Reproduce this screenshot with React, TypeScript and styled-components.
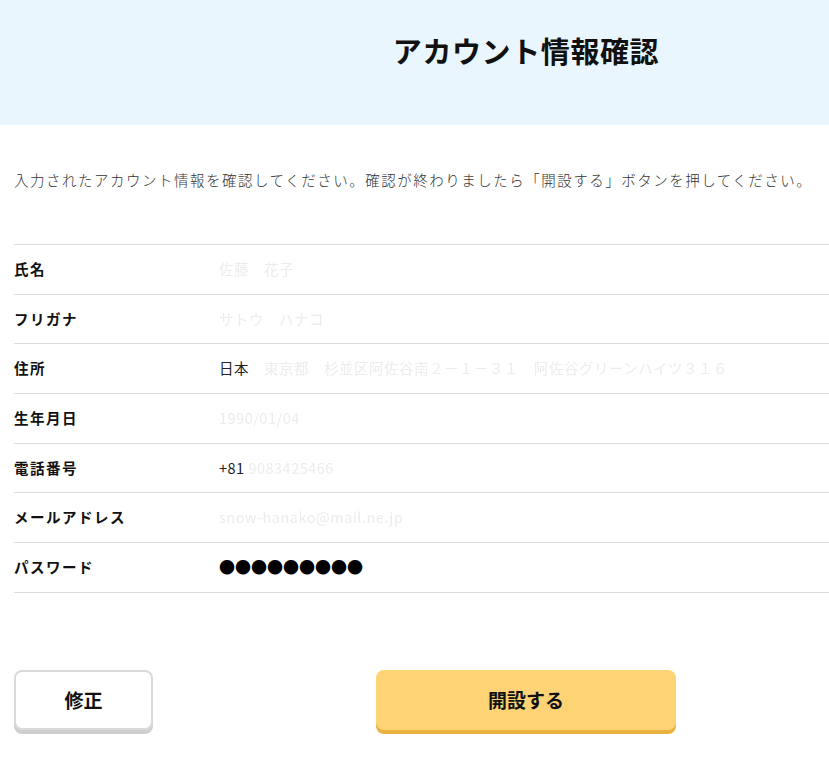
import React from 'react'
import styled, { createGlobalStyle } from 'styled-components'

const GlobalStyle = createGlobalStyle`
  html, body {
    margin: 0;
    padding: 0;
    background: #fff;
    overflow-x: hidden;
  }
  body {
    font-family: "Noto Sans CJK JP", "Noto Sans", sans-serif;
    color: #222;
  }
`

const Page = styled.div`
  width: 1052px;
  overflow: hidden;
`

const Header = styled.header`
  background-color: #e9f6fd;
  height: 125px;
  display: flex;
  justify-content: center;
  padding-top: 29px;
  box-sizing: border-box;
`

const Title = styled.h1`
  margin: 0;
  font-size: 29px;
  font-weight: 700;
  line-height: 42px;
  color: #111;
  letter-spacing: 0.6px;
`

const Main = styled.main`
  padding: 0 14px;
`

const Lead = styled.p`
  margin: 44px 0 0;
  font-size: 14.5px;
  line-height: 22px;
  letter-spacing: 1.5px;
  color: #333;
  font-weight: 300;
`

const Table = styled.dl`
  margin: 53px 0 0;
  border-top: 1px solid #dcdcdc;
`

const Row = styled.div`
  display: flex;
  align-items: center;
  height: 48.7px;
  padding-bottom: 2px;
  box-sizing: border-box;
  height: 49.7px;
  border-bottom: 1px solid #dcdcdc;
`

const Label = styled.dt`
  width: 205px;
  font-size: 14.5px;
  font-weight: 700;
  letter-spacing: 1.5px;
  color: #111;
`

const Value = styled.dd`
  margin: 0;
  font-size: 14.5px;
  letter-spacing: 0.5px;
  color: #222;
`

const Masked = styled.span`
  color: #ececec;
  filter: blur(0.6px);
`

const Dots = styled.span`
  font-size: 16px;
  letter-spacing: 0;
  color: #000;
`

const Actions = styled.div`
  position: relative;
  display: flex;
  justify-content: center;
  margin-top: 77px;
  padding-bottom: 40px;
`

const Button = styled.button<{ $primary?: boolean }>`
  font-family: "Noto Sans CJK JP", "Noto Sans", sans-serif;
  font-size: 19px;
  font-weight: 700;
  color: #111;
  height: 60px;
  border-radius: 8px;
  cursor: pointer;
  width: ${p => (p.$primary ? '300px' : '139px')};
  background: ${p => (p.$primary ? '#fdd375' : '#fff')};
  border: ${p => (p.$primary ? 'none' : '2px solid #dadada')};
  box-shadow: 0 4px 0 ${p => (p.$primary ? '#e9b23f' : '#cfcfcf')};
`

const BackButton = styled(Button)`
  position: absolute;
  left: 0;
  top: 0;
`

const rows: { label: string; value: React.ReactNode }[] = [
  { label: '氏名', value: <Masked>佐藤　花子</Masked> },
  { label: 'フリガナ', value: <Masked>サトウ　ハナコ</Masked> },
  {
    label: '住所',
    value: (
      <>
        日本　<Masked>東京都　杉並区阿佐谷南２－１－３１　阿佐谷グリーンハイツ３１６</Masked>
      </>
    ),
  },
  { label: '生年月日', value: <Masked>1990/01/04</Masked> },
  {
    label: '電話番号',
    value: (
      <>
        +81 <Masked>9083425466</Masked>
      </>
    ),
  },
  { label: 'メールアドレス', value: <Masked>snow-hanako@mail.ne.jp</Masked> },
  { label: 'パスワード', value: <Dots>●●●●●●●●●</Dots> },
]

export default function App() {
  return (
    <Page>
      <GlobalStyle />
      <Header>
        <Title>アカウント情報確認</Title>
      </Header>
      <Main>
        <Lead>
          入力されたアカウント情報を確認してください。確認が終わりましたら「開設する」ボタンを押してください。
        </Lead>
        <Table>
          {rows.map(r => (
            <Row key={r.label}>
              <Label>{r.label}</Label>
              <Value>{r.value}</Value>
            </Row>
          ))}
        </Table>
        <Actions>
          <BackButton>修正</BackButton>
          <Button $primary>開設する</Button>
        </Actions>
      </Main>
    </Page>
  )
}
